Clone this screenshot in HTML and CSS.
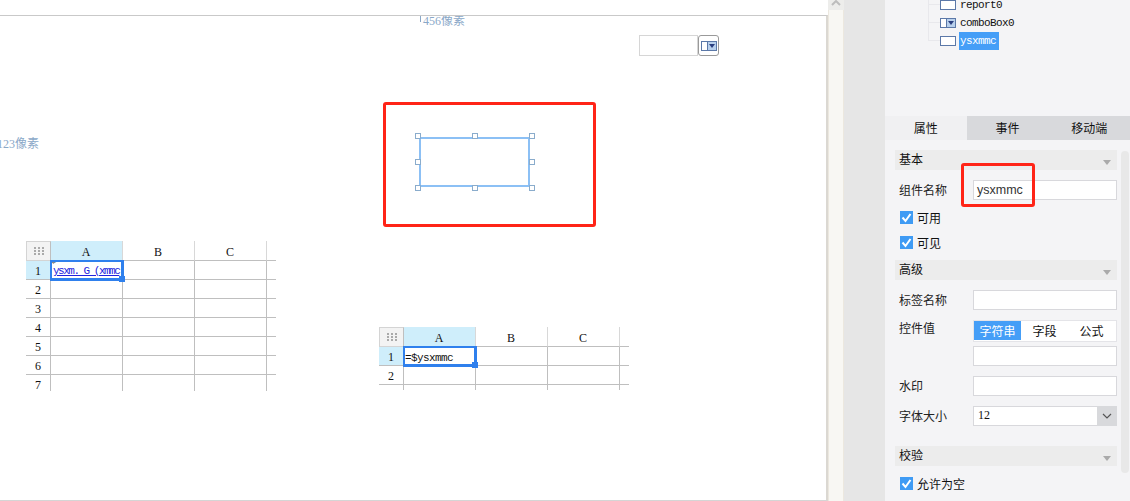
FILE: index.html
```html
<!DOCTYPE html>
<html lang="zh-CN">
<head>
    <meta charset="UTF-8">
    <meta name="viewport" content="width=device-width, initial-scale=1.0">
    <title>表单设计</title>
    <link rel="stylesheet" href="styles.css">
</head>
<body>
    <div class="designer">
        <div class="canvas-area">
            <div class="canvas">
                <span class="size-label size-width">456像素</span>
                <span class="size-label size-height">123像素</span>

                <!-- comboBox0 -->
                <div class="combo-widget">
                    <div class="combo-input"></div>
                    <div class="combo-button">
                        <svg width="16" height="10" viewBox="0 0 16 10">
                            <rect x="0.5" y="0.5" width="15" height="9" fill="#fff" stroke="#5b78a8"/>
                            <rect x="6.5" y="0.5" width="9" height="9" fill="#b8d0ec" stroke="#5b78a8"/>
                            <path d="M8 3h6l-3 4z" fill="#2a3f80"/>
                        </svg>
                    </div>
                </div>

                <!-- selected ysxmmc -->
                <div class="selected-widget">
                    <i class="handle h-tl"></i>
                    <i class="handle h-tc"></i>
                    <i class="handle h-tr"></i>
                    <i class="handle h-ml"></i>
                    <i class="handle h-mr"></i>
                    <i class="handle h-bl"></i>
                    <i class="handle h-bc"></i>
                    <i class="handle h-br"></i>
                </div>

                <div class="sheet sheet-one">
                    <div class="cell corner"><i class="dots"></i></div><div class="cell head active">A</div><div class="cell head">B</div><div class="cell head">C</div><div class="cell end"></div>
                    <div class="cell num active">1</div><div class="cell formula-link"><span class="mark">+</span><span>ysxm. G (xmmc</span></div><div class="cell"></div><div class="cell"></div><div class="cell end"></div>
                    <div class="cell num">2</div><div class="cell"></div><div class="cell"></div><div class="cell"></div><div class="cell end"></div>
                    <div class="cell num">3</div><div class="cell"></div><div class="cell"></div><div class="cell"></div><div class="cell end"></div>
                    <div class="cell num">4</div><div class="cell"></div><div class="cell"></div><div class="cell"></div><div class="cell end"></div>
                    <div class="cell num">5</div><div class="cell"></div><div class="cell"></div><div class="cell"></div><div class="cell end"></div>
                    <div class="cell num">6</div><div class="cell"></div><div class="cell"></div><div class="cell"></div><div class="cell end"></div>
                    <div class="cell num">7</div><div class="cell"></div><div class="cell"></div><div class="cell"></div><div class="cell end"></div>
                    <div class="cell-select"><i class="cell-grip"></i></div>
                </div>

                <div class="sheet sheet-two">
                    <div class="cell corner"><i class="dots"></i></div><div class="cell head active">A</div><div class="cell head">B</div><div class="cell head">C</div><div class="cell end"></div>
                    <div class="cell num active">1</div><div class="cell formula">=$ysxmmc</div><div class="cell"></div><div class="cell"></div><div class="cell end"></div>
                    <div class="cell num">2</div><div class="cell"></div><div class="cell"></div><div class="cell"></div><div class="cell end"></div>
                    <div class="cell num">3</div><div class="cell"></div><div class="cell"></div><div class="cell"></div><div class="cell end"></div>
                    <div class="cell-select"><i class="cell-grip"></i></div>
                </div>

                <div class="callout callout-widget"></div>
            </div>
        </div>

        <div class="scroll-strip">
            <div class="scroll-up">
                <svg width="10" height="6" viewBox="0 0 10 6"><path d="M1 5l4-4 4 4" fill="none" stroke="#bdbdbd" stroke-width="2"/></svg>
            </div>
        </div>
        <div class="gutter"></div>

        <aside class="panel">
            <ul class="tree">
                <li class="tree-row">
                    <svg class="tree-icon" width="16" height="10" viewBox="0 0 16 10"><rect x="0.5" y="0.5" width="15" height="9" fill="#fff" stroke="#5b78a8"/></svg>
                    <span class="tree-text">report0</span>
                </li>
                <li class="tree-row">
                    <svg class="tree-icon" width="16" height="10" viewBox="0 0 16 10">
                        <rect x="0.5" y="0.5" width="15" height="9" fill="#fff" stroke="#5b78a8"/>
                        <rect x="6.5" y="0.5" width="9" height="9" fill="#b8d0ec" stroke="#5b78a8"/>
                        <path d="M8 3h6l-3 4z" fill="#2a3f80"/>
                    </svg>
                    <span class="tree-text">comboBox0</span>
                </li>
                <li class="tree-row">
                    <svg class="tree-icon" width="16" height="10" viewBox="0 0 16 10"><rect x="0.5" y="0.5" width="15" height="9" fill="#fff" stroke="#5b78a8"/></svg>
                    <span class="tree-text selected">ysxmmc</span>
                </li>
            </ul>

            <div class="tabs">
                <div class="tab active">属性</div>
                <div class="tab">事件</div>
                <div class="tab">移动端</div>
            </div>

            <div class="props">
                <div class="form">
                    <div class="section-head">基本<i class="caret"></i></div>
                    <div class="field first">
                        <label class="field-label">组件名称</label>
                        <div class="text-box">ysxmmc</div>
                    </div>
                    <div class="check-row first">
                        <svg class="check" width="13" height="13" viewBox="0 0 13 13"><rect width="13" height="13" fill="#3f9bf4"/><path d="M2.5 6.5l3 3.5 5-7" fill="none" stroke="#fff" stroke-width="2"/></svg>
                        可用
                    </div>
                    <div class="check-row">
                        <svg class="check" width="13" height="13" viewBox="0 0 13 13"><rect width="13" height="13" fill="#3f9bf4"/><path d="M2.5 6.5l3 3.5 5-7" fill="none" stroke="#fff" stroke-width="2"/></svg>
                        可见
                    </div>

                    <div class="section-head next">高级<i class="caret"></i></div>
                    <div class="field first">
                        <label class="field-label">标签名称</label>
                        <div class="text-box"></div>
                    </div>
                    <div class="field seg-field">
                        <label class="field-label">控件值</label>
                        <div class="segments">
                            <div class="segment active">字符串</div>
                            <div class="segment">字段</div>
                            <div class="segment">公式</div>
                        </div>
                    </div>
                    <div class="field value-field">
                        <span class="field-label"></span>
                        <div class="text-box"></div>
                    </div>
                    <div class="field">
                        <label class="field-label">水印</label>
                        <div class="text-box"></div>
                    </div>
                    <div class="field">
                        <label class="field-label">字体大小</label>
                        <div class="select-box">
                            <span class="select-value">12</span>
                            <span class="select-button">
                                <svg width="10" height="6" viewBox="0 0 10 6"><path d="M1 1l4 4 4-4" fill="none" stroke="#555" stroke-width="1.2"/></svg>
                            </span>
                        </div>
                    </div>

                    <div class="section-head last">校验<i class="caret"></i></div>
                    <div class="check-row first">
                        <svg class="check" width="13" height="13" viewBox="0 0 13 13"><rect width="13" height="13" fill="#3f9bf4"/><path d="M2.5 6.5l3 3.5 5-7" fill="none" stroke="#fff" stroke-width="2"/></svg>
                        允许为空
                    </div>
                </div>
                <div class="props-scroll"></div>
            </div>
        </aside>

        <div class="callout callout-name"></div>
    </div>
</body>
</html>
```

FILE: styles.css
```css
* {
    margin: 0;
    padding: 0;
    box-sizing: border-box;
}

html, body {
    width: 100%;
    height: 100%;
    overflow: hidden;
    background: #fff;
}

body {
    font-family: "Noto Sans CJK SC", "Liberation Sans", sans-serif;
    font-size: 12px;
    color: #222;
}

.designer {
    position: relative;
    display: flex;
    height: 501px;
}

/* canvas */
.canvas-area {
    width: 828px;
    padding-top: 15px;
    flex: none;
}

.canvas {
    position: relative;
    height: 486px;
    border-top: 1px solid #c9c9c9;
    border-right: 2px solid #dbd8d2;
    border-bottom: 1px solid #d5d5d5;
    overflow: hidden;
}

.size-label {
    position: absolute;
    font-family: "Liberation Serif", "Noto Sans CJK SC", serif;
    font-size: 12px;
    line-height: 14px;
    color: #8aa8c8;
}

.size-label.size-width {
    left: 423px;
    top: -2px;
}

.size-label.size-width::before {
    content: "";
    position: absolute;
    left: -3px;
    top: 2px;
    width: 1px;
    height: 6px;
    background: #8aa8c8;
}

.size-label.size-height {
    left: -3px;
    top: 121px;
}

.callout {
    position: absolute;
    border: 3px solid #ff2417;
    border-radius: 3px;
}

.callout-widget {
    left: 383px;
    top: 86px;
    width: 213px;
    height: 125px;
}

.callout-name {
    left: 961px;
    top: 163px;
    width: 74px;
    height: 44px;
}

.combo-widget {
    position: absolute;
    left: 639px;
    top: 19px;
    display: flex;
}

.combo-input {
    width: 59px;
    height: 21px;
    border: 1px solid #d6d6d6;
    background: #fff;
}

.combo-button {
    width: 21px;
    height: 21px;
    border: 1px solid #9a9a9a;
    border-radius: 3px;
    display: flex;
    align-items: center;
    justify-content: center;
}

.selected-widget {
    position: absolute;
    left: 419px;
    top: 121px;
    width: 111px;
    height: 50px;
    border: 2px solid #8cc0f5;
}

.handle {
    position: absolute;
    width: 6px;
    height: 6px;
    background: #fff;
    border: 1px solid #8aaccc;
}

.h-tl { left: -6px; top: -6px; }
.h-tc { left: 51px; top: -6px; }
.h-tr { left: 108px; top: -6px; }
.h-ml { left: -6px; top: 20px; }
.h-mr { left: 108px; top: 20px; }
.h-bl { left: -6px; top: 46px; }
.h-bc { left: 51px; top: 46px; }
.h-br { left: 108px; top: 46px; }

/* spreadsheets */
.sheet {
    position: absolute;
    display: grid;
    grid-template-columns: 25px 72px 72px 72px 9px;
    grid-auto-rows: 19px;
    grid-template-rows: 20px;
    font-family: "Liberation Mono", monospace;
    font-size: 11px;
    letter-spacing: -0.6px;
    color: #111;
    overflow: hidden;
}

.sheet-one {
    left: 26px;
    top: 225px;
    width: 250px;
    height: 150px;
}

.sheet-two {
    left: 379px;
    top: 311px;
    width: 250px;
    height: 63px;
}

.cell {
    border-right: 1px solid #bfbfbf;
    border-bottom: 1px solid #bfbfbf;
    line-height: 22px;
    white-space: nowrap;
    overflow: hidden;
}

.cell.end {
    border-right: none;
}

.cell.head {
    padding-right: 1px;
    text-align: center;
    border-right-color: #d8d8d8;
    font-family: "Liberation Serif", serif;
    font-size: 12px;
    letter-spacing: 0;
    line-height: 22px;
}

.cell.num {
    text-align: center;
    background: #fff;
    font-family: "Liberation Serif", serif;
    font-size: 12px;
    letter-spacing: 0;
    line-height: 20px;
}

.cell.num.active,
.cell.head.active {
    background: #cfeefb;
}

.cell.corner {
    background: #f3f3f3;
    border: 1px solid #d4d4d4;
    border-right-color: #bfbfbf;
    display: flex;
    align-items: center;
    justify-content: center;
}

.dots {
    width: 2px;
    height: 2px;
    background: #aaa;
    box-shadow: -4px -3px #aaa, 0 -3px #aaa, 4px -3px #aaa, -4px 0 #aaa, 4px 0 #aaa, -4px 3px #aaa, 0 3px #aaa, 4px 3px #aaa;
}

.cell.formula {
    padding-left: 1px;
}

.cell.formula-link {
    position: relative;
    padding-left: 2px;
    color: #2222dd;
    text-decoration: underline;
    letter-spacing: -1.5px;
    line-height: 21px;
    overflow: visible;
}

.mark {
    position: absolute;
    left: 0;
    top: -2px;
    color: #888;
    font-size: 8px;
    font-weight: bold;
    line-height: 8px;
    text-decoration: none;
}

.cell-select {
    position: absolute;
    left: 24px;
    top: 19px;
    width: 74px;
    height: 21px;
    border-style: solid;
    border-color: #2f80ed;
    border-width: 2px 3px 3px 2px;
}

.cell-grip {
    position: absolute;
    right: -4px;
    bottom: -4px;
    width: 6px;
    height: 6px;
    background: #2f80ed;
}

/* middle strips */
.scroll-strip {
    width: 16px;
    flex: none;
    background: #f8f7f3;
    border-left: 1px solid #ece8df;
    border-right: 1px solid #ece8df;
}

.scroll-up {
    height: 10px;
    margin: 0 -1px;
    background: #ededeb;
    display: flex;
    align-items: flex-start;
    justify-content: center;
}

.gutter {
    width: 41px;
    flex: none;
    background: #e6e6e6;
}

/* right panel */
.panel {
    width: 245px;
    flex: none;
    background: #f4f4f6;
    overflow: hidden;
}

.tree {
    list-style: none;
    height: 120px;
    margin-top: -4px;
}

.tree-row {
    position: relative;
    display: flex;
    align-items: center;
    height: 18px;
    padding-left: 55px;
}

.tree-row::before {
    content: "";
    position: absolute;
    left: 43px;
    top: 8px;
    width: 12px;
    height: 1px;
    background: #e8e8ec;
}

.tree-row::after {
    content: "";
    position: absolute;
    left: 43px;
    top: -10px;
    width: 1px;
    height: 18px;
    background: #e8e8ec;
}

.tree-text {
    margin-left: 3px;
    padding: 0 1px;
    height: 18px;
    line-height: 19px;
    font-family: "Liberation Mono", monospace;
    font-size: 11px;
    letter-spacing: -0.6px;
    color: #111;
}

.tree-text.selected {
    width: 40px;
    background: #459ef7;
    color: #fff;
}

.tabs {
    display: flex;
    height: 24px;
    background: #d8d9dc;
}

.tab {
    width: 82px;
    line-height: 24px;
    text-align: center;
    color: #111;
}

.tab.active {
    background: #f0f0f2;
}

.props {
    display: flex;
    gap: 4px;
    padding: 10px 0 0 10px;
}

.form {
    width: 222px;
    flex: none;
}

.props-scroll {
    width: 8px;
    height: 322px;
    margin-top: 1px;
    background: #e8e8e8;
    border-radius: 4px;
}

.section-head {
    position: relative;
    height: 20px;
    padding-left: 4px;
    line-height: 18px;
    background: #ececec;
    color: #111;
}

.section-head.next {
    margin-top: 5px;
}

.section-head.last {
    margin-top: 20px;
}

.caret {
    position: absolute;
    right: 6px;
    top: 10px;
    width: 0;
    height: 0;
    border-left: 4px solid transparent;
    border-right: 4px solid transparent;
    border-top: 5px solid #aaa;
}

.field {
    display: flex;
    height: 20px;
    margin-top: 10px;
}

.field-label {
    width: 78px;
    flex: none;
    padding-left: 4px;
    line-height: 20px;
}

.text-box {
    flex: 1;
    height: 20px;
    padding-left: 3px;
    background: #fff;
    border: 1px solid #d8d8dc;
    font-family: "Liberation Sans", sans-serif;
    font-size: 12.5px;
    line-height: 18px;
    color: #333;
}

.field.seg-field {
    height: 22px;
}

.seg-field .field-label {
    line-height: 16px;
}

.field.value-field {
    margin-top: 4px;
}

.segments {
    flex: 1;
    display: flex;
    height: 22px;
    background: #fff;
    border: 1px solid #e4e4e8;
    padding-bottom: 1px;
}

.segment {
    width: 47px;
    line-height: 19px;
    text-align: center;
    color: #111;
}

.segment.active {
    background: #459ef7;
    color: #fff;
}

.select-box {
    flex: 1;
    display: flex;
    height: 20px;
    background: #fff;
    border: 1px solid #d8d8dc;
}

.select-value {
    flex: 1;
    padding-left: 4px;
    font-family: "Liberation Serif", serif;
    font-size: 12px;
    line-height: 17px;
    color: #111;
}

.select-button {
    width: 20px;
    margin: -1px -1px -1px 0;
    background: #d8d9dc;
    display: flex;
    align-items: center;
    justify-content: center;
}

.check-row {
    display: flex;
    align-items: center;
    gap: 4px;
    height: 25px;
    padding-left: 5px;
    color: #111;
}

.check-row.first {
    margin-top: 5px;
}
```
